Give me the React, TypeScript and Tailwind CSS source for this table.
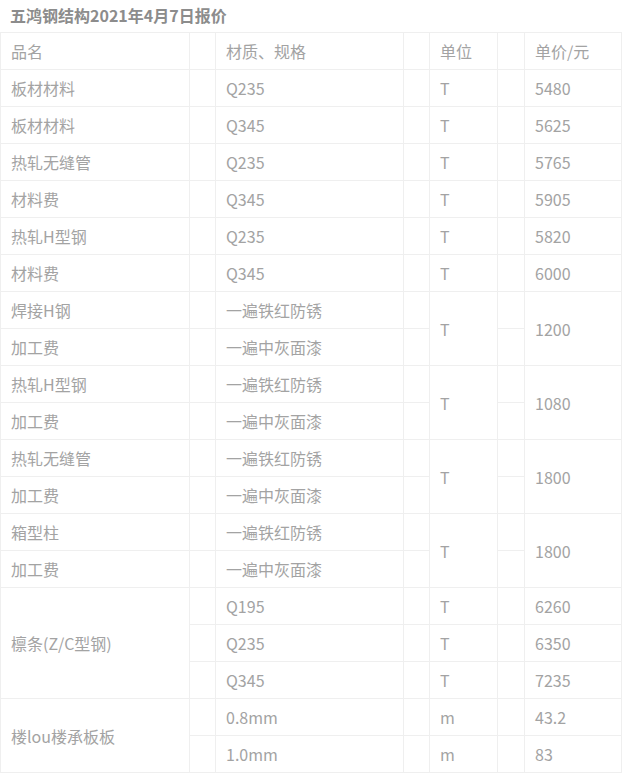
import React from "react";

type Row = {
  name?: string;
  nameSpan?: number;
  spec: string;
  unit?: string;
  price?: string;
  span?: number;
};

const rows: Row[] = [
  { name: "板材材料", spec: "Q235", unit: "T", price: "5480" },
  { name: "板材材料", spec: "Q345", unit: "T", price: "5625" },
  { name: "热轧无缝管", spec: "Q235", unit: "T", price: "5765" },
  { name: "材料费", spec: "Q345", unit: "T", price: "5905" },
  { name: "热轧H型钢", spec: "Q235", unit: "T", price: "5820" },
  { name: "材料费", spec: "Q345", unit: "T", price: "6000" },
  { name: "焊接H钢", spec: "一遍铁红防锈", unit: "T", price: "1200", span: 2 },
  { name: "加工费", spec: "一遍中灰面漆" },
  { name: "热轧H型钢", spec: "一遍铁红防锈", unit: "T", price: "1080", span: 2 },
  { name: "加工费", spec: "一遍中灰面漆" },
  { name: "热轧无缝管", spec: "一遍铁红防锈", unit: "T", price: "1800", span: 2 },
  { name: "加工费", spec: "一遍中灰面漆" },
  { name: "箱型柱", spec: "一遍铁红防锈", unit: "T", price: "1800", span: 2 },
  { name: "加工费", spec: "一遍中灰面漆" },
  { name: "檩条(Z/C型钢)", nameSpan: 3, spec: "Q195", unit: "T", price: "6260" },
  { spec: "Q235", unit: "T", price: "6350" },
  { spec: "Q345", unit: "T", price: "7235" },
  { name: "楼lou楼承板板", nameSpan: 2, spec: "0.8mm", unit: "m", price: "43.2" },
  { spec: "1.0mm", unit: "m", price: "83" },
];

const td = "border border-[#efefef] pl-[10px] pr-1 align-middle whitespace-nowrap";
const gap = "border border-[#efefef]";

export default function App() {
  return (
    <div
      className="w-[623px] bg-white text-[#a3a3a3] text-[16px]"
      style={{ fontFamily: '"Noto Sans CJK SC", "Noto Sans", sans-serif' }}
    >
      <div className="h-[32px] pl-[10px] pt-[3px] text-[16px] font-bold leading-[24px] text-[#8c8c8c]">
        五鸿钢结构2021年4月7日报价
      </div>
      <table className="w-[621px] table-fixed border-collapse">
        <colgroup>
          <col className="w-[189px]" />
          <col className="w-[26px]" />
          <col className="w-[188px]" />
          <col className="w-[26px]" />
          <col className="w-[68px]" />
          <col className="w-[27px]" />
          <col className="w-[97px]" />
        </colgroup>
        <tbody>
          <tr className="h-[37px]">
            <td className={td}>品名</td>
            <td className={gap}></td>
            <td className={td}>材质、规格</td>
            <td className={gap}></td>
            <td className={td}>单位</td>
            <td className={gap}></td>
            <td className={td}>单价/元</td>
          </tr>
          {rows.map((r, i) => (
            <tr key={i} className="h-[37px]">
              {r.name !== undefined && (
                <td className={td} rowSpan={r.nameSpan ?? 1}>
                  {r.name}
                </td>
              )}
              <td className={gap}></td>
              <td className={td}>{r.spec}</td>
              <td className={gap}></td>
              {r.unit !== undefined && (
                <td className={td} rowSpan={r.span ?? 1}>
                  {r.unit}
                </td>
              )}
              <td className={gap}></td>
              {r.price !== undefined && (
                <td className={td} rowSpan={r.span ?? 1}>
                  {r.price}
                </td>
              )}
            </tr>
          ))}
        </tbody>
      </table>
    </div>
  );
}
